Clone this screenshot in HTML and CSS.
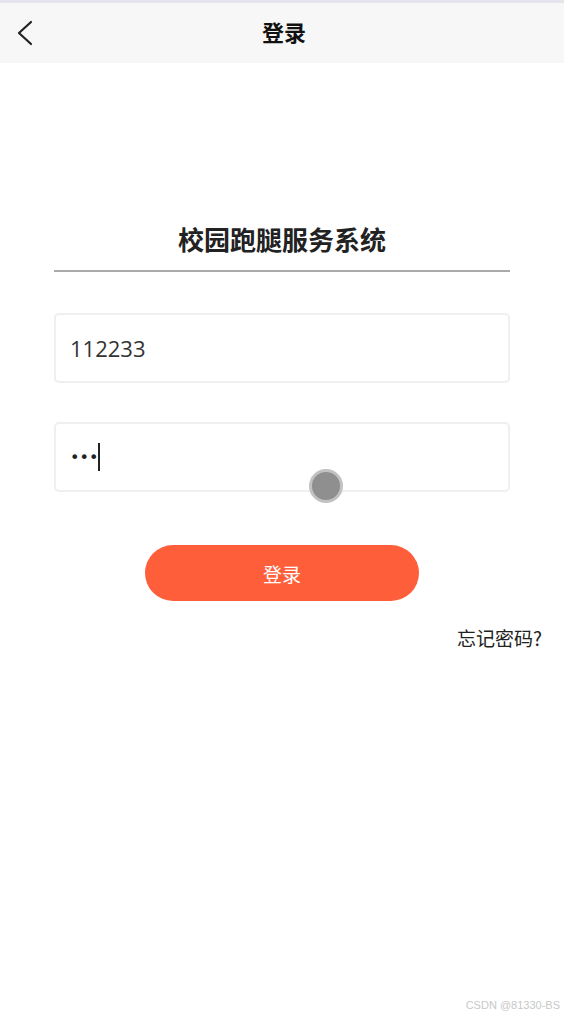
FILE: index.html
```html
<!DOCTYPE html>
<html lang="zh">
<head>
<meta charset="utf-8">
<link rel="stylesheet" href="styles.css">
</head>
<body>
<div class="page">
  <div class="topline"></div>
  <header class="navbar">
    <span class="back">
      <svg width="18" height="26" viewBox="0 0 18 26"><path d="M15 2 L3 13 L15 24" fill="none" stroke="#222" stroke-width="2.2" stroke-linecap="round" stroke-linejoin="round"/></svg>
    </span>
    <h1 class="nav-title">登录</h1>
  </header>
  <main class="content">
    <h2 class="app-title">校园跑腿服务系统</h2>
    <div class="divider"></div>
    <div class="field"><span class="value">112233</span></div>
    <div class="field pw"><span class="dots">•••</span><span class="caret"></span><span class="touch"></span></div>
    <div class="btn-row"><button class="login-btn">登录</button></div>
    <div class="forgot-row"><span class="forgot">忘记密码?</span></div>
  </main>
  <div class="watermark">CSDN @81330-BS</div>
</div>
</body>
</html>
```
FILE: styles.css
```css
* { box-sizing: border-box; margin: 0; padding: 0; }
html, body { width: 564px; height: 1015px; overflow: hidden; background: #fff; }
body { font-family: "Noto Sans CJK SC", "Open Sans", sans-serif; color: #222; }
.page { position: relative; width: 564px; height: 1015px; }
.topline { height: 3px; background: #e3e4ec; }
.navbar { position: relative; height: 60px; background: #f7f7f7; display: flex; align-items: center; justify-content: center; }
.back { position: absolute; left: 16px; top: 17px; display: flex; }
.nav-title { font-size: 22px; font-weight: 700; color: #111; line-height: 1; margin-left: 4px; margin-bottom: 4px; }
.content { padding: 160px 54px 0; }
.app-title { text-align: center; font-size: 26px; font-weight: 700; color: #222; line-height: 32px; height: 32px; }
.divider { height: 2px; background: #aaa; margin-top: 15px; }
.field { position: relative; height: 70px; border: 2px solid #efefef; border-radius: 5px; display: flex; align-items: center; padding-left: 14px; margin-top: 41px; }
.field.pw { margin-top: 39px; }
.value { font-family: "Open Sans", sans-serif; font-size: 22px; color: #333; }
.dots { font-family: "DejaVu Sans", sans-serif; font-size: 16px; color: #222; letter-spacing: 0; }
.caret { width: 2px; height: 28px; background: #222; margin-left: 0; }
.touch { position: absolute; left: 253px; top: 45px; width: 34px; height: 34px; border-radius: 50%; background: #8f8f8f; border: 3px solid #c2c2c2; }
.btn-row { display: flex; justify-content: center; margin-top: 53px; padding-right: 0; }
.login-btn { width: 274px; height: 56px; border: none; border-radius: 28px; background: #ff5e3a; color: #fff; font-family: "Noto Sans CJK SC", sans-serif; font-size: 19px; }
.forgot-row { display: flex; justify-content: flex-end; margin-right: -32px; margin-top: 24px; }
.forgot { font-size: 19px; color: #222; line-height: 26px; }
.watermark { position: absolute; right: 4px; bottom: 4px; font-family: "Liberation Sans", sans-serif; font-size: 11px; color: #c8c8c8; }
```
